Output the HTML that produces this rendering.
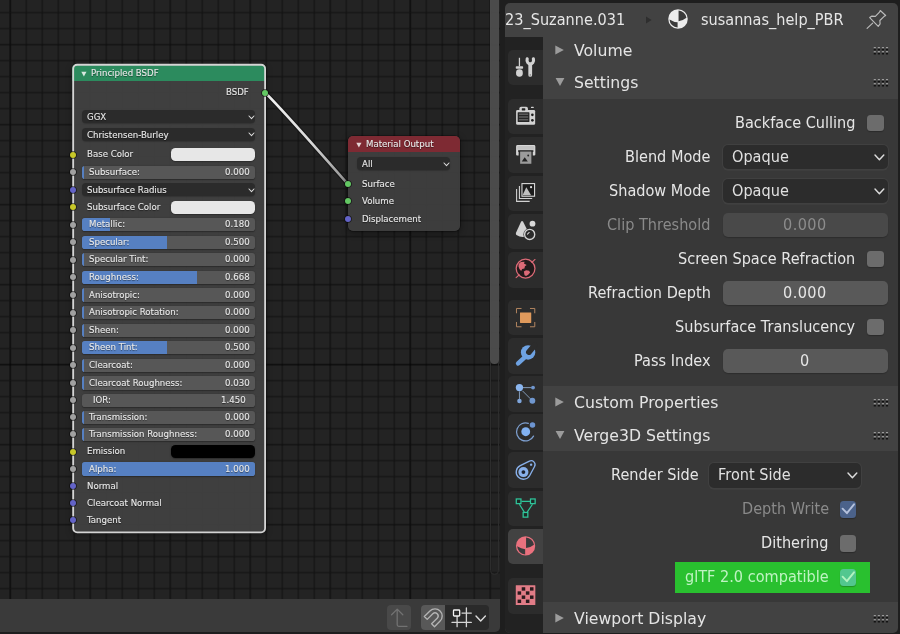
<!DOCTYPE html><html><head><meta charset="utf-8"><title>Blender</title><style>
html,body{margin:0;padding:0;}
body{-webkit-font-smoothing:antialiased;width:900px;height:634px;overflow:hidden;background:#1e1e1e;position:relative;font-family:"DejaVu Sans","Liberation Sans",sans-serif;}
.abs{position:absolute;}
.nt,.pt,.ph{will-change:transform;}
#ne{position:absolute;left:0;top:0;width:500.1px;height:632px;background:#232323;overflow:hidden;border-bottom-right-radius:5px;}
.nt{position:absolute;font-size:8.6px;letter-spacing:0px;color:#e8e8e8;white-space:nowrap;line-height:12px;height:12px;text-shadow:0 1px 1px rgba(0,0,0,.55);-webkit-text-stroke:0.12px #e8e8e8;}
.ntr{text-align:right;}
.dd{position:absolute;background:#2b2b2b;border-radius:4px;box-shadow:0 0.8px 1.2px rgba(0,0,0,.25);}
.sl{position:absolute;background:#575757;border-radius:2.8px;overflow:hidden;box-shadow:0 0.8px 1.4px rgba(0,0,0,.35);}
.sl i{position:absolute;left:0;top:0;bottom:0;background:#5680c2;display:block;}
.sw{position:absolute;border-radius:4.5px;box-shadow:0 0.8px 1.4px rgba(0,0,0,.4);}
.sock{position:absolute;width:6.0px;height:6.0px;border-radius:50%;box-shadow:0 0 0 .75px rgba(10,10,10,.75);}
.pt{position:absolute;font-size:14.5px;color:#e6e6e6;white-space:nowrap;line-height:20px;height:20px;transform:scaleY(1.06);transform-origin:50% 15px;}
.ptr{text-align:right;}
.ph{position:absolute;font-size:15.7px;color:#e4e4e4;white-space:nowrap;line-height:20px;height:20px;}
.tab{position:absolute;left:508px;width:35.2px;height:35.6px;background:#2c2c2c;border-radius:5px 0 0 5px;}
.fld{position:absolute;border-radius:5px;box-sizing:border-box;}
.cb{position:absolute;width:16.2px;height:16.4px;border-radius:3.5px;background:#666666;box-shadow:0 1px 1px rgba(0,0,0,.25);}
</style></head><body>
<div id="ne">
<svg class="abs" style="left:0;top:0" width="501" height="600" viewBox="0 0 501 600"><rect x="9.25" y="0" width="2.00" height="600" fill="#060606" opacity="0.38"/><rect x="9.75" y="0" width="1.00" height="600" fill="#060606" opacity="0.42"/><rect x="25.25" y="0" width="2.00" height="600" fill="#161616" opacity="0.38"/><rect x="25.75" y="0" width="1.00" height="600" fill="#161616" opacity="0.42"/><rect x="41.25" y="0" width="2.00" height="600" fill="#161616" opacity="0.38"/><rect x="41.75" y="0" width="1.00" height="600" fill="#161616" opacity="0.42"/><rect x="57.25" y="0" width="2.00" height="600" fill="#161616" opacity="0.38"/><rect x="57.75" y="0" width="1.00" height="600" fill="#161616" opacity="0.42"/><rect x="73.25" y="0" width="2.00" height="600" fill="#161616" opacity="0.38"/><rect x="73.75" y="0" width="1.00" height="600" fill="#161616" opacity="0.42"/><rect x="89.25" y="0" width="2.00" height="600" fill="#101010" opacity="0.38"/><rect x="89.75" y="0" width="1.00" height="600" fill="#101010" opacity="0.42"/><rect x="105.25" y="0" width="2.00" height="600" fill="#161616" opacity="0.38"/><rect x="105.75" y="0" width="1.00" height="600" fill="#161616" opacity="0.42"/><rect x="121.25" y="0" width="2.00" height="600" fill="#161616" opacity="0.38"/><rect x="121.75" y="0" width="1.00" height="600" fill="#161616" opacity="0.42"/><rect x="137.25" y="0" width="2.00" height="600" fill="#161616" opacity="0.38"/><rect x="137.75" y="0" width="1.00" height="600" fill="#161616" opacity="0.42"/><rect x="153.25" y="0" width="2.00" height="600" fill="#161616" opacity="0.38"/><rect x="153.75" y="0" width="1.00" height="600" fill="#161616" opacity="0.42"/><rect x="169.25" y="0" width="2.00" height="600" fill="#101010" opacity="0.38"/><rect x="169.75" y="0" width="1.00" height="600" fill="#101010" opacity="0.42"/><rect x="185.25" y="0" width="2.00" height="600" fill="#161616" opacity="0.38"/><rect x="185.75" y="0" width="1.00" height="600" fill="#161616" opacity="0.42"/><rect x="201.25" y="0" width="2.00" height="600" fill="#161616" opacity="0.38"/><rect x="201.75" y="0" width="1.00" height="600" fill="#161616" opacity="0.42"/><rect x="217.25" y="0" width="2.00" height="600" fill="#161616" opacity="0.38"/><rect x="217.75" y="0" width="1.00" height="600" fill="#161616" opacity="0.42"/><rect x="233.25" y="0" width="2.00" height="600" fill="#161616" opacity="0.38"/><rect x="233.75" y="0" width="1.00" height="600" fill="#161616" opacity="0.42"/><rect x="249.25" y="0" width="2.00" height="600" fill="#101010" opacity="0.38"/><rect x="249.75" y="0" width="1.00" height="600" fill="#101010" opacity="0.42"/><rect x="265.25" y="0" width="2.00" height="600" fill="#161616" opacity="0.38"/><rect x="265.75" y="0" width="1.00" height="600" fill="#161616" opacity="0.42"/><rect x="281.25" y="0" width="2.00" height="600" fill="#161616" opacity="0.38"/><rect x="281.75" y="0" width="1.00" height="600" fill="#161616" opacity="0.42"/><rect x="297.25" y="0" width="2.00" height="600" fill="#161616" opacity="0.38"/><rect x="297.75" y="0" width="1.00" height="600" fill="#161616" opacity="0.42"/><rect x="313.25" y="0" width="2.00" height="600" fill="#161616" opacity="0.38"/><rect x="313.75" y="0" width="1.00" height="600" fill="#161616" opacity="0.42"/><rect x="329.25" y="0" width="2.00" height="600" fill="#101010" opacity="0.38"/><rect x="329.75" y="0" width="1.00" height="600" fill="#101010" opacity="0.42"/><rect x="345.25" y="0" width="2.00" height="600" fill="#161616" opacity="0.38"/><rect x="345.75" y="0" width="1.00" height="600" fill="#161616" opacity="0.42"/><rect x="361.25" y="0" width="2.00" height="600" fill="#161616" opacity="0.38"/><rect x="361.75" y="0" width="1.00" height="600" fill="#161616" opacity="0.42"/><rect x="377.25" y="0" width="2.00" height="600" fill="#161616" opacity="0.38"/><rect x="377.75" y="0" width="1.00" height="600" fill="#161616" opacity="0.42"/><rect x="393.25" y="0" width="2.00" height="600" fill="#161616" opacity="0.38"/><rect x="393.75" y="0" width="1.00" height="600" fill="#161616" opacity="0.42"/><rect x="409.25" y="0" width="2.00" height="600" fill="#060606" opacity="0.38"/><rect x="409.75" y="0" width="1.00" height="600" fill="#060606" opacity="0.42"/><rect x="425.25" y="0" width="2.00" height="600" fill="#161616" opacity="0.38"/><rect x="425.75" y="0" width="1.00" height="600" fill="#161616" opacity="0.42"/><rect x="441.25" y="0" width="2.00" height="600" fill="#161616" opacity="0.38"/><rect x="441.75" y="0" width="1.00" height="600" fill="#161616" opacity="0.42"/><rect x="457.25" y="0" width="2.00" height="600" fill="#161616" opacity="0.38"/><rect x="457.75" y="0" width="1.00" height="600" fill="#161616" opacity="0.42"/><rect x="473.25" y="0" width="2.00" height="600" fill="#161616" opacity="0.38"/><rect x="473.75" y="0" width="1.00" height="600" fill="#161616" opacity="0.42"/><rect x="489.25" y="0" width="2.00" height="600" fill="#101010" opacity="0.38"/><rect x="489.75" y="0" width="1.00" height="600" fill="#101010" opacity="0.42"/><rect x="0" y="11.65" width="501" height="2.00" fill="#161616" opacity="0.38"/><rect x="0" y="12.15" width="501" height="1.00" fill="#161616" opacity="0.42"/><rect x="0" y="27.65" width="501" height="2.00" fill="#161616" opacity="0.38"/><rect x="0" y="28.15" width="501" height="1.00" fill="#161616" opacity="0.42"/><rect x="0" y="43.65" width="501" height="2.00" fill="#101010" opacity="0.38"/><rect x="0" y="44.15" width="501" height="1.00" fill="#101010" opacity="0.42"/><rect x="0" y="59.65" width="501" height="2.00" fill="#161616" opacity="0.38"/><rect x="0" y="60.15" width="501" height="1.00" fill="#161616" opacity="0.42"/><rect x="0" y="75.65" width="501" height="2.00" fill="#161616" opacity="0.38"/><rect x="0" y="76.15" width="501" height="1.00" fill="#161616" opacity="0.42"/><rect x="0" y="91.65" width="501" height="2.00" fill="#161616" opacity="0.38"/><rect x="0" y="92.15" width="501" height="1.00" fill="#161616" opacity="0.42"/><rect x="0" y="107.65" width="501" height="2.00" fill="#161616" opacity="0.38"/><rect x="0" y="108.15" width="501" height="1.00" fill="#161616" opacity="0.42"/><rect x="0" y="123.65" width="501" height="2.00" fill="#101010" opacity="0.38"/><rect x="0" y="124.15" width="501" height="1.00" fill="#101010" opacity="0.42"/><rect x="0" y="139.65" width="501" height="2.00" fill="#161616" opacity="0.38"/><rect x="0" y="140.15" width="501" height="1.00" fill="#161616" opacity="0.42"/><rect x="0" y="155.65" width="501" height="2.00" fill="#161616" opacity="0.38"/><rect x="0" y="156.15" width="501" height="1.00" fill="#161616" opacity="0.42"/><rect x="0" y="171.65" width="501" height="2.00" fill="#161616" opacity="0.38"/><rect x="0" y="172.15" width="501" height="1.00" fill="#161616" opacity="0.42"/><rect x="0" y="187.65" width="501" height="2.00" fill="#161616" opacity="0.38"/><rect x="0" y="188.15" width="501" height="1.00" fill="#161616" opacity="0.42"/><rect x="0" y="203.65" width="501" height="2.00" fill="#101010" opacity="0.38"/><rect x="0" y="204.15" width="501" height="1.00" fill="#101010" opacity="0.42"/><rect x="0" y="219.65" width="501" height="2.00" fill="#161616" opacity="0.38"/><rect x="0" y="220.15" width="501" height="1.00" fill="#161616" opacity="0.42"/><rect x="0" y="235.65" width="501" height="2.00" fill="#161616" opacity="0.38"/><rect x="0" y="236.15" width="501" height="1.00" fill="#161616" opacity="0.42"/><rect x="0" y="251.65" width="501" height="2.00" fill="#161616" opacity="0.38"/><rect x="0" y="252.15" width="501" height="1.00" fill="#161616" opacity="0.42"/><rect x="0" y="267.65" width="501" height="2.00" fill="#161616" opacity="0.38"/><rect x="0" y="268.15" width="501" height="1.00" fill="#161616" opacity="0.42"/><rect x="0" y="283.65" width="501" height="2.00" fill="#101010" opacity="0.38"/><rect x="0" y="284.15" width="501" height="1.00" fill="#101010" opacity="0.42"/><rect x="0" y="299.65" width="501" height="2.00" fill="#161616" opacity="0.38"/><rect x="0" y="300.15" width="501" height="1.00" fill="#161616" opacity="0.42"/><rect x="0" y="315.65" width="501" height="2.00" fill="#161616" opacity="0.38"/><rect x="0" y="316.15" width="501" height="1.00" fill="#161616" opacity="0.42"/><rect x="0" y="331.65" width="501" height="2.00" fill="#161616" opacity="0.38"/><rect x="0" y="332.15" width="501" height="1.00" fill="#161616" opacity="0.42"/><rect x="0" y="347.65" width="501" height="2.00" fill="#161616" opacity="0.38"/><rect x="0" y="348.15" width="501" height="1.00" fill="#161616" opacity="0.42"/><rect x="0" y="363.65" width="501" height="2.00" fill="#060606" opacity="0.38"/><rect x="0" y="364.15" width="501" height="1.00" fill="#060606" opacity="0.42"/><rect x="0" y="379.65" width="501" height="2.00" fill="#161616" opacity="0.38"/><rect x="0" y="380.15" width="501" height="1.00" fill="#161616" opacity="0.42"/><rect x="0" y="395.65" width="501" height="2.00" fill="#161616" opacity="0.38"/><rect x="0" y="396.15" width="501" height="1.00" fill="#161616" opacity="0.42"/><rect x="0" y="411.65" width="501" height="2.00" fill="#161616" opacity="0.38"/><rect x="0" y="412.15" width="501" height="1.00" fill="#161616" opacity="0.42"/><rect x="0" y="427.65" width="501" height="2.00" fill="#161616" opacity="0.38"/><rect x="0" y="428.15" width="501" height="1.00" fill="#161616" opacity="0.42"/><rect x="0" y="443.65" width="501" height="2.00" fill="#101010" opacity="0.38"/><rect x="0" y="444.15" width="501" height="1.00" fill="#101010" opacity="0.42"/><rect x="0" y="459.65" width="501" height="2.00" fill="#161616" opacity="0.38"/><rect x="0" y="460.15" width="501" height="1.00" fill="#161616" opacity="0.42"/><rect x="0" y="475.65" width="501" height="2.00" fill="#161616" opacity="0.38"/><rect x="0" y="476.15" width="501" height="1.00" fill="#161616" opacity="0.42"/><rect x="0" y="491.65" width="501" height="2.00" fill="#161616" opacity="0.38"/><rect x="0" y="492.15" width="501" height="1.00" fill="#161616" opacity="0.42"/><rect x="0" y="507.65" width="501" height="2.00" fill="#161616" opacity="0.38"/><rect x="0" y="508.15" width="501" height="1.00" fill="#161616" opacity="0.42"/><rect x="0" y="523.65" width="501" height="2.00" fill="#101010" opacity="0.38"/><rect x="0" y="524.15" width="501" height="1.00" fill="#101010" opacity="0.42"/><rect x="0" y="539.65" width="501" height="2.00" fill="#161616" opacity="0.38"/><rect x="0" y="540.15" width="501" height="1.00" fill="#161616" opacity="0.42"/><rect x="0" y="555.65" width="501" height="2.00" fill="#161616" opacity="0.38"/><rect x="0" y="556.15" width="501" height="1.00" fill="#161616" opacity="0.42"/><rect x="0" y="571.65" width="501" height="2.00" fill="#161616" opacity="0.38"/><rect x="0" y="572.15" width="501" height="1.00" fill="#161616" opacity="0.42"/><rect x="0" y="587.65" width="501" height="2.00" fill="#161616" opacity="0.38"/><rect x="0" y="588.15" width="501" height="1.00" fill="#161616" opacity="0.42"/></svg>
<div class="abs" style="left:490.2px;top:-6px;width:8.6px;height:581px;border:0.8px solid #2d2d2d;border-radius:4.5px;box-sizing:border-box;"></div>
<div class="abs" style="left:490.3px;top:-6px;width:8.4px;height:369.7px;background:rgba(80,80,80,.9);border-radius:4.2px;"></div>
<svg class="abs" style="left:0;top:0" width="501" height="600" viewBox="0 0 501 600"><defs><linearGradient id="lg" gradientUnits="userSpaceOnUse" x1="265" y1="92.5" x2="347.7" y2="183.9"><stop offset="0" stop-color="#f4f4f4"/><stop offset="0.55" stop-color="#d8d8d8"/><stop offset="1" stop-color="#8e8e8e"/></linearGradient></defs><path d="M265 92.5 C283 110 330 164 347.7 183.9" stroke="#141414" stroke-width="4.6" fill="none" stroke-linecap="round" opacity=".9"/><path d="M265 92.5 C283 110 330 164 347.7 183.9" stroke="url(#lg)" stroke-width="2.5" fill="none" stroke-linecap="round"/></svg>
<div class="abs" style="left:72.40px;top:64.40px;width:193.80px;height:468.60px;border-radius:5px;background:rgba(66,66,66,.93);box-shadow:0 2px 6px rgba(0,0,0,.35);overflow:hidden;"><div class="abs" style="left:0;top:0;right:0;height:16.30px;background:#2c8b5e;"></div></div>
<svg class="abs" style="left:0;top:0" width="501" height="600" viewBox="0 0 501 600"><rect x="73.2" y="64.75" width="191.9" height="467.55" rx="4" ry="4" fill="none" stroke="#d4d4d4" stroke-width="1.8"/></svg>
<svg class="abs" style="left:80.6px;top:70.6px" width="6" height="6" viewBox="0 0 6 6"><path d="M0.3 0.8 L5.5 0.8 L2.9 5.4 Z" fill="#d8e8e0"/></svg>
<div class="nt" style="top:66.70px;left:90.60px;">Principled BSDF</div>
<div class="nt ntr" style="top:86.20px;right:250.90px;">BSDF</div>
<div class="sock" style="left:262.00px;top:89.50px;background:#63c763"></div>
<div class="dd" style="left:81.90px;top:110.20px;width:173.40px;height:12.80px"></div>
<div class="nt" style="top:110.80px;left:86.80px;">GGX</div>
<svg class="abs" style="left:246.80px;top:113.70px" width="9.00" height="6.60" viewBox="0 0 9.00 6.60"><path d="M2.00 2.00 L4.50 4.60 L7.00 2.00" fill="none" stroke="#dddddd" stroke-width="1.05" stroke-linecap="round" stroke-linejoin="round"/></svg>
<div class="dd" style="left:81.90px;top:127.90px;width:173.40px;height:12.80px"></div>
<div class="nt" style="top:128.50px;left:86.80px;">Christensen-Burley</div>
<svg class="abs" style="left:246.80px;top:131.40px" width="9.00" height="6.60" viewBox="0 0 9.00 6.60"><path d="M2.00 2.00 L4.50 4.60 L7.00 2.00" fill="none" stroke="#dddddd" stroke-width="1.05" stroke-linecap="round" stroke-linejoin="round"/></svg>
<div class="nt" style="top:148.35px;left:86.80px;">Base Color</div>
<div class="sw" style="left:171.4px;top:148.15px;width:84px;height:13.00px;background:#e7e7e7"></div>
<div class="sock" style="left:70.00px;top:151.50px;background:#c7c729"></div>
<div class="sl" style="left:81.90px;top:165.55px;width:173.40px;height:13.20px"><i style="width:2.30px"></i></div>
<div class="nt" style="top:165.85px;left:88.70px;">Subsurface:</div>
<div class="nt ntr" style="top:165.85px;right:250.90px;">0.000</div>
<div class="sock" style="left:70.00px;top:169.00px;background:#a1a1a1"></div>
<div class="dd" style="left:81.90px;top:183.25px;width:173.40px;height:12.80px"></div>
<div class="nt" style="top:183.85px;left:86.80px;">Subsurface Radius</div>
<svg class="abs" style="left:246.80px;top:186.75px" width="9.00" height="6.60" viewBox="0 0 9.00 6.60"><path d="M2.00 2.00 L4.50 4.60 L7.00 2.00" fill="none" stroke="#dddddd" stroke-width="1.05" stroke-linecap="round" stroke-linejoin="round"/></svg>
<div class="sock" style="left:70.00px;top:186.50px;background:#6363c7"></div>
<div class="nt" style="top:200.95px;left:86.80px;">Subsurface Color</div>
<div class="sw" style="left:171.4px;top:200.75px;width:84px;height:13.00px;background:#e7e7e7"></div>
<div class="sock" style="left:70.00px;top:204.10px;background:#c7c729"></div>
<div class="sl" style="left:81.90px;top:218.15px;width:173.40px;height:13.20px"><i style="width:28.10px"></i></div>
<div class="nt" style="top:218.45px;left:88.70px;">Metallic:</div>
<div class="nt ntr" style="top:218.45px;right:250.90px;">0.180</div>
<div class="sock" style="left:70.00px;top:221.60px;background:#a1a1a1"></div>
<div class="sl" style="left:81.90px;top:235.75px;width:173.40px;height:13.20px"><i style="width:85.00px"></i></div>
<div class="nt" style="top:236.05px;left:88.70px;">Specular:</div>
<div class="nt ntr" style="top:236.05px;right:250.90px;">0.500</div>
<div class="sock" style="left:70.00px;top:239.20px;background:#a1a1a1"></div>
<div class="sl" style="left:81.90px;top:253.15px;width:173.40px;height:13.20px"><i style="width:2.30px"></i></div>
<div class="nt" style="top:253.45px;left:88.70px;">Specular Tint:</div>
<div class="nt ntr" style="top:253.45px;right:250.90px;">0.000</div>
<div class="sock" style="left:70.00px;top:256.60px;background:#a1a1a1"></div>
<div class="sl" style="left:81.90px;top:271.00px;width:173.40px;height:13.20px"><i style="width:114.87px"></i></div>
<div class="nt" style="top:271.30px;left:88.70px;">Roughness:</div>
<div class="nt ntr" style="top:271.30px;right:250.90px;">0.668</div>
<div class="sock" style="left:70.00px;top:274.45px;background:#a1a1a1"></div>
<div class="sl" style="left:81.90px;top:288.45px;width:173.40px;height:13.20px"><i style="width:2.30px"></i></div>
<div class="nt" style="top:288.75px;left:88.70px;">Anisotropic:</div>
<div class="nt ntr" style="top:288.75px;right:250.90px;">0.000</div>
<div class="sock" style="left:70.00px;top:291.90px;background:#a1a1a1"></div>
<div class="sl" style="left:81.90px;top:306.05px;width:173.40px;height:13.20px"><i style="width:2.30px"></i></div>
<div class="nt" style="top:306.35px;left:88.70px;">Anisotropic Rotation:</div>
<div class="nt ntr" style="top:306.35px;right:250.90px;">0.000</div>
<div class="sock" style="left:70.00px;top:309.50px;background:#a1a1a1"></div>
<div class="sl" style="left:81.90px;top:323.75px;width:173.40px;height:13.20px"><i style="width:2.30px"></i></div>
<div class="nt" style="top:324.05px;left:88.70px;">Sheen:</div>
<div class="nt ntr" style="top:324.05px;right:250.90px;">0.000</div>
<div class="sock" style="left:70.00px;top:327.20px;background:#a1a1a1"></div>
<div class="sl" style="left:81.90px;top:341.10px;width:173.40px;height:13.20px"><i style="width:85.00px"></i></div>
<div class="nt" style="top:341.40px;left:88.70px;">Sheen Tint:</div>
<div class="nt ntr" style="top:341.40px;right:250.90px;">0.500</div>
<div class="sock" style="left:70.00px;top:344.55px;background:#a1a1a1"></div>
<div class="sl" style="left:81.90px;top:358.55px;width:173.40px;height:13.20px"><i style="width:2.30px"></i></div>
<div class="nt" style="top:358.85px;left:88.70px;">Clearcoat:</div>
<div class="nt ntr" style="top:358.85px;right:250.90px;">0.000</div>
<div class="sock" style="left:70.00px;top:362.00px;background:#a1a1a1"></div>
<div class="sl" style="left:81.90px;top:376.35px;width:173.40px;height:13.20px"><i style="width:2.30px"></i></div>
<div class="nt" style="top:376.65px;left:88.70px;">Clearcoat Roughness:</div>
<div class="nt ntr" style="top:376.65px;right:250.90px;">0.030</div>
<div class="sock" style="left:70.00px;top:379.80px;background:#a1a1a1"></div>
<div class="sl" style="left:81.90px;top:393.55px;width:173.40px;height:13.20px"></div>
<div class="nt" style="top:393.85px;left:92.90px;">IOR:</div>
<div class="nt ntr" style="top:393.85px;right:254.80px;">1.450</div>
<div class="sock" style="left:70.00px;top:397.00px;background:#a1a1a1"></div>
<div class="sl" style="left:81.90px;top:410.55px;width:173.40px;height:13.20px"><i style="width:2.30px"></i></div>
<div class="nt" style="top:410.85px;left:88.70px;">Transmission:</div>
<div class="nt ntr" style="top:410.85px;right:250.90px;">0.000</div>
<div class="sock" style="left:70.00px;top:414.00px;background:#a1a1a1"></div>
<div class="sl" style="left:81.90px;top:427.85px;width:173.40px;height:13.20px"><i style="width:2.30px"></i></div>
<div class="nt" style="top:428.15px;left:88.70px;">Transmission Roughness:</div>
<div class="nt ntr" style="top:428.15px;right:250.90px;">0.000</div>
<div class="sock" style="left:70.00px;top:431.30px;background:#a1a1a1"></div>
<div class="nt" style="top:445.40px;left:86.80px;">Emission</div>
<div class="sw" style="left:171.4px;top:445.20px;width:84px;height:13.00px;background:#000000"></div>
<div class="sock" style="left:70.00px;top:448.55px;background:#c7c729"></div>
<div class="sl" style="left:81.90px;top:462.35px;width:173.40px;height:13.20px"><i style="width:173.40px"></i></div>
<div class="nt" style="top:462.65px;left:88.70px;">Alpha:</div>
<div class="nt ntr" style="top:462.65px;right:250.90px;">1.000</div>
<div class="sock" style="left:70.00px;top:465.80px;background:#a1a1a1"></div>
<div class="nt" style="top:480.05px;left:86.80px;">Normal</div>
<div class="sock" style="left:70.00px;top:483.20px;background:#6363c7"></div>
<div class="nt" style="top:496.95px;left:86.80px;">Clearcoat Normal</div>
<div class="sock" style="left:70.00px;top:500.10px;background:#6363c7"></div>
<div class="nt" style="top:514.15px;left:86.80px;">Tangent</div>
<div class="sock" style="left:70.00px;top:517.30px;background:#6363c7"></div>
<div class="abs" style="left:348.10px;top:135.90px;width:112.00px;height:94.90px;border-radius:5px;background:rgba(64,64,64,.93);box-shadow:0 2px 7px rgba(0,0,0,.45),0 0 0 .6px rgba(0,0,0,.5);overflow:hidden;"><div class="abs" style="left:0;top:0;right:0;height:15.90px;background:#7e2a33;"></div></div>
<svg class="abs" style="left:355.6px;top:141.6px" width="6" height="6" viewBox="0 0 6 6"><path d="M0.3 0.8 L5.5 0.8 L2.9 5.4 Z" fill="#e6d6d8"/></svg>
<div class="nt" style="top:137.90px;left:365.60px;">Material Output</div>
<div class="dd" style="left:356.80px;top:157.30px;width:93.40px;height:13.00px"></div>
<div class="nt" style="top:158.00px;left:361.70px;">All</div>
<svg class="abs" style="left:441.70px;top:160.90px" width="9.00" height="6.60" viewBox="0 0 9.00 6.60"><path d="M2.00 2.00 L4.50 4.60 L7.00 2.00" fill="none" stroke="#dddddd" stroke-width="1.05" stroke-linecap="round" stroke-linejoin="round"/></svg>
<div class="nt" style="top:177.60px;left:361.80px;">Surface</div>
<div class="sock" style="left:344.70px;top:180.90px;background:#63c763"></div>
<div class="nt" style="top:195.00px;left:361.80px;">Volume</div>
<div class="sock" style="left:344.70px;top:198.30px;background:#63c763"></div>
<div class="nt" style="top:212.50px;left:361.80px;">Displacement</div>
<div class="sock" style="left:344.70px;top:215.80px;background:#6363c7"></div>
<div class="abs" style="left:0;top:599.1px;width:500.5px;height:33px;background:#3a3a3a;"></div>
<div class="abs" style="left:386.7px;top:605.3px;width:24.2px;height:24.7px;background:#494949;border-radius:4px;"></div>
<svg class="abs" style="left:386.7px;top:605.3px" width="25" height="25" viewBox="0 0 25 25"><path d="M4.6 9.8 L10.2 4.1 L15.8 9.8 M10.2 4.3 V19.8 Q10.2 21.3 11.7 21.3 H20" fill="none" stroke="#727272" stroke-width="1.3" stroke-linecap="round" stroke-linejoin="round"/></svg>
<div class="abs" style="left:421.1px;top:605.3px;width:24.3px;height:24.7px;background:#585858;border-radius:4px 0 0 4px;"></div>
<svg class="abs" style="left:414.6px;top:596.0px" width="40" height="40" viewBox="-20 -20 40 40"><g transform="rotate(45)"><path d="M-7.20 7.90 L-7.20 0 A7.20 7.20 0 0 1 7.20 0 L7.20 7.90 L3.10 7.90 L3.10 0 A3.10 3.10 0 0 0 -3.10 0 L-3.10 7.90 Z" fill="none" stroke="#b4b4b4" stroke-width="1.35" stroke-linejoin="round"/></g></svg>
<div class="abs" style="left:445.4px;top:605.3px;width:43.8px;height:24.7px;background:#2a2a2a;border-radius:0 4px 4px 0;"></div>
<svg class="abs" style="left:445px;top:600px" width="34" height="34" viewBox="445 600 34 34"><path d="M457.1 616.2 V626.7 M466.4 608 V626.7 M452 622.4 H471.3 M462 613.1 H471.3" fill="none" stroke="#d4d4d4" stroke-width="1.3" stroke-linecap="round"/><rect x="453.5" y="610.0" width="6.2" height="6.0" rx="0.8" fill="#2a2a2a" stroke="#f4f4f4" stroke-width="1.3"/></svg>
<svg class="abs" style="left:474.40px;top:613.75px" width="13.40" height="8.90" viewBox="0 0 13.40 8.90"><path d="M2.00 2.00 L6.70 6.90 L11.40 2.00" fill="none" stroke="#dcdcdc" stroke-width="1.40" stroke-linecap="round" stroke-linejoin="round"/></svg>
</div>
<div class="abs" id="pe" style="left:505.00px;top:3.20px;width:393.40px;height:630.00px;background:#424242;border-radius:5px;overflow:hidden;">
<div class="abs" style="left:0;top:34.10px;width:38.10px;height:600px;background:#222222;"></div>
<div class="abs" style="left:38.10px;top:95.40px;right:0;height:287.30px;background:#383838;"></div>
<div class="abs" style="left:38.10px;top:447.70px;right:0;height:150.80px;background:#383838;"></div>
</div>
<div class="pt" style="top:9.70px;left:505.40px;">23_Suzanne.031</div>
<svg class="abs" style="left:644px;top:15px" width="10" height="10" viewBox="0 0 10 10"><path d="M2 1.6 L7.6 5 L2 8.4 Z" fill="#2e2e2e"/></svg>
<svg class="abs" style="left:666.40px;top:7.40px" width="24" height="24" viewBox="-12 -12 24 24"><g transform="scale(0.06724)"><circle r="145" fill="#ececec"/><path d="M8 -127 L8 32 Q74 26 126 -18 A127 127 0 0 0 8 -127 Z" fill="#3a3a3a"/><path d="M-126 6 Q-64 44 -6 50 L-6 127 A127 127 0 0 1 -126 6 Z" fill="#3a3a3a"/></g></svg>
<div class="pt" style="top:9.70px;left:701.00px;">susannas_help_PBR</div>
<svg class="abs" style="left:860px;top:5px" width="30" height="30" viewBox="0 0 634 634"><g fill="none" stroke="#bcbcbc" stroke-width="24" stroke-linejoin="round" stroke-linecap="round"><path d="M150 495 L268 382"/><path d="M205 265 L245 236 L325 240 L412 152 L428 116 L542 222 L505 245 L420 328 L425 400 L385 450 Z"/></g></svg>
<svg class="abs" style="left:555.20px;top:44.70px" width="10" height="10" viewBox="0 0 10 10"><path d="M0.3 0.6 L8.8 5 L0.3 9.4 Z" fill="#9c9c9c"/></svg>
<div class="ph" style="top:40.60px;left:573.60px;">Volume</div>
<svg class="abs" style="left:873px;top:46.70px" width="16" height="9" viewBox="0 0 16 9"><rect x="0.75" y="0.00" width="2.1" height="1.5" fill="#9c9c9c"/><rect x="0.75" y="1.60" width="2.1" height="1.8" fill="#121212"/><rect x="4.82" y="0.00" width="2.1" height="1.5" fill="#9c9c9c"/><rect x="4.82" y="1.60" width="2.1" height="1.8" fill="#121212"/><rect x="8.89" y="0.00" width="2.1" height="1.5" fill="#9c9c9c"/><rect x="8.89" y="1.60" width="2.1" height="1.8" fill="#121212"/><rect x="12.96" y="0.00" width="2.1" height="1.5" fill="#9c9c9c"/><rect x="12.96" y="1.60" width="2.1" height="1.8" fill="#121212"/><rect x="0.75" y="4.10" width="2.1" height="1.5" fill="#9c9c9c"/><rect x="0.75" y="5.70" width="2.1" height="1.8" fill="#121212"/><rect x="4.82" y="4.10" width="2.1" height="1.5" fill="#9c9c9c"/><rect x="4.82" y="5.70" width="2.1" height="1.8" fill="#121212"/><rect x="8.89" y="4.10" width="2.1" height="1.5" fill="#9c9c9c"/><rect x="8.89" y="5.70" width="2.1" height="1.8" fill="#121212"/><rect x="12.96" y="4.10" width="2.1" height="1.5" fill="#9c9c9c"/><rect x="12.96" y="5.70" width="2.1" height="1.8" fill="#121212"/></svg>
<svg class="abs" style="left:555.00px;top:77.30px" width="10" height="10" viewBox="0 0 10 10"><path d="M0.6 0.9 L9.4 0.9 L5 8.9 Z" fill="#9c9c9c"/></svg>
<div class="ph" style="top:73.20px;left:573.60px;">Settings</div>
<svg class="abs" style="left:873px;top:79.30px" width="16" height="9" viewBox="0 0 16 9"><rect x="0.75" y="0.00" width="2.1" height="1.5" fill="#9c9c9c"/><rect x="0.75" y="1.60" width="2.1" height="1.8" fill="#121212"/><rect x="4.82" y="0.00" width="2.1" height="1.5" fill="#9c9c9c"/><rect x="4.82" y="1.60" width="2.1" height="1.8" fill="#121212"/><rect x="8.89" y="0.00" width="2.1" height="1.5" fill="#9c9c9c"/><rect x="8.89" y="1.60" width="2.1" height="1.8" fill="#121212"/><rect x="12.96" y="0.00" width="2.1" height="1.5" fill="#9c9c9c"/><rect x="12.96" y="1.60" width="2.1" height="1.8" fill="#121212"/><rect x="0.75" y="4.10" width="2.1" height="1.5" fill="#9c9c9c"/><rect x="0.75" y="5.70" width="2.1" height="1.8" fill="#121212"/><rect x="4.82" y="4.10" width="2.1" height="1.5" fill="#9c9c9c"/><rect x="4.82" y="5.70" width="2.1" height="1.8" fill="#121212"/><rect x="8.89" y="4.10" width="2.1" height="1.5" fill="#9c9c9c"/><rect x="8.89" y="5.70" width="2.1" height="1.8" fill="#121212"/><rect x="12.96" y="4.10" width="2.1" height="1.5" fill="#9c9c9c"/><rect x="12.96" y="5.70" width="2.1" height="1.8" fill="#121212"/></svg>
<svg class="abs" style="left:555.20px;top:397.20px" width="10" height="10" viewBox="0 0 10 10"><path d="M0.3 0.6 L8.8 5 L0.3 9.4 Z" fill="#9c9c9c"/></svg>
<div class="ph" style="top:393.10px;left:573.60px;">Custom Properties</div>
<svg class="abs" style="left:873px;top:399.20px" width="16" height="9" viewBox="0 0 16 9"><rect x="0.75" y="0.00" width="2.1" height="1.5" fill="#9c9c9c"/><rect x="0.75" y="1.60" width="2.1" height="1.8" fill="#121212"/><rect x="4.82" y="0.00" width="2.1" height="1.5" fill="#9c9c9c"/><rect x="4.82" y="1.60" width="2.1" height="1.8" fill="#121212"/><rect x="8.89" y="0.00" width="2.1" height="1.5" fill="#9c9c9c"/><rect x="8.89" y="1.60" width="2.1" height="1.8" fill="#121212"/><rect x="12.96" y="0.00" width="2.1" height="1.5" fill="#9c9c9c"/><rect x="12.96" y="1.60" width="2.1" height="1.8" fill="#121212"/><rect x="0.75" y="4.10" width="2.1" height="1.5" fill="#9c9c9c"/><rect x="0.75" y="5.70" width="2.1" height="1.8" fill="#121212"/><rect x="4.82" y="4.10" width="2.1" height="1.5" fill="#9c9c9c"/><rect x="4.82" y="5.70" width="2.1" height="1.8" fill="#121212"/><rect x="8.89" y="4.10" width="2.1" height="1.5" fill="#9c9c9c"/><rect x="8.89" y="5.70" width="2.1" height="1.8" fill="#121212"/><rect x="12.96" y="4.10" width="2.1" height="1.5" fill="#9c9c9c"/><rect x="12.96" y="5.70" width="2.1" height="1.8" fill="#121212"/></svg>
<svg class="abs" style="left:555.00px;top:429.80px" width="10" height="10" viewBox="0 0 10 10"><path d="M0.6 0.9 L9.4 0.9 L5 8.9 Z" fill="#9c9c9c"/></svg>
<div class="ph" style="top:425.70px;left:573.60px;">Verge3D Settings</div>
<svg class="abs" style="left:873px;top:431.80px" width="16" height="9" viewBox="0 0 16 9"><rect x="0.75" y="0.00" width="2.1" height="1.5" fill="#9c9c9c"/><rect x="0.75" y="1.60" width="2.1" height="1.8" fill="#121212"/><rect x="4.82" y="0.00" width="2.1" height="1.5" fill="#9c9c9c"/><rect x="4.82" y="1.60" width="2.1" height="1.8" fill="#121212"/><rect x="8.89" y="0.00" width="2.1" height="1.5" fill="#9c9c9c"/><rect x="8.89" y="1.60" width="2.1" height="1.8" fill="#121212"/><rect x="12.96" y="0.00" width="2.1" height="1.5" fill="#9c9c9c"/><rect x="12.96" y="1.60" width="2.1" height="1.8" fill="#121212"/><rect x="0.75" y="4.10" width="2.1" height="1.5" fill="#9c9c9c"/><rect x="0.75" y="5.70" width="2.1" height="1.8" fill="#121212"/><rect x="4.82" y="4.10" width="2.1" height="1.5" fill="#9c9c9c"/><rect x="4.82" y="5.70" width="2.1" height="1.8" fill="#121212"/><rect x="8.89" y="4.10" width="2.1" height="1.5" fill="#9c9c9c"/><rect x="8.89" y="5.70" width="2.1" height="1.8" fill="#121212"/><rect x="12.96" y="4.10" width="2.1" height="1.5" fill="#9c9c9c"/><rect x="12.96" y="5.70" width="2.1" height="1.8" fill="#121212"/></svg>
<svg class="abs" style="left:555.20px;top:613.40px" width="10" height="10" viewBox="0 0 10 10"><path d="M0.3 0.6 L8.8 5 L0.3 9.4 Z" fill="#9c9c9c"/></svg>
<div class="ph" style="top:609.30px;left:573.60px;">Viewport Display</div>
<svg class="abs" style="left:873px;top:615.40px" width="16" height="9" viewBox="0 0 16 9"><rect x="0.75" y="0.00" width="2.1" height="1.5" fill="#9c9c9c"/><rect x="0.75" y="1.60" width="2.1" height="1.8" fill="#121212"/><rect x="4.82" y="0.00" width="2.1" height="1.5" fill="#9c9c9c"/><rect x="4.82" y="1.60" width="2.1" height="1.8" fill="#121212"/><rect x="8.89" y="0.00" width="2.1" height="1.5" fill="#9c9c9c"/><rect x="8.89" y="1.60" width="2.1" height="1.8" fill="#121212"/><rect x="12.96" y="0.00" width="2.1" height="1.5" fill="#9c9c9c"/><rect x="12.96" y="1.60" width="2.1" height="1.8" fill="#121212"/><rect x="0.75" y="4.10" width="2.1" height="1.5" fill="#9c9c9c"/><rect x="0.75" y="5.70" width="2.1" height="1.8" fill="#121212"/><rect x="4.82" y="4.10" width="2.1" height="1.5" fill="#9c9c9c"/><rect x="4.82" y="5.70" width="2.1" height="1.8" fill="#121212"/><rect x="8.89" y="4.10" width="2.1" height="1.5" fill="#9c9c9c"/><rect x="8.89" y="5.70" width="2.1" height="1.8" fill="#121212"/><rect x="12.96" y="4.10" width="2.1" height="1.5" fill="#9c9c9c"/><rect x="12.96" y="5.70" width="2.1" height="1.8" fill="#121212"/></svg>
<div class="pt ptr" style="top:112.60px;right:44.80px;">Backface Culling</div>
<div class="cb" style="left:867.40px;top:114.90px;background:#6c6c6c"></div>
<div class="pt ptr" style="top:146.60px;right:189.20px;">Blend Mode</div>
<div class="fld" style="left:722.70px;top:144.90px;width:165.70px;height:24.40px;background:#2c2c2c;box-shadow:0 0 0 1px #404040,0 1.6px 0 0 #434343;"></div>
<div class="pt" style="top:146.70px;left:732.30px;color:#e0e0e0;">Opaque</div>
<svg class="abs" style="left:873.40px;top:153.25px" width="12.80" height="8.70" viewBox="0 0 12.80 8.70"><path d="M2.00 2.00 L6.40 6.70 L10.80 2.00" fill="none" stroke="#dcdcdc" stroke-width="1.45" stroke-linecap="round" stroke-linejoin="round"/></svg>
<div class="pt ptr" style="top:180.60px;right:189.20px;">Shadow Mode</div>
<div class="fld" style="left:722.70px;top:178.90px;width:165.70px;height:24.40px;background:#2c2c2c;box-shadow:0 0 0 1px #404040,0 1.6px 0 0 #434343;"></div>
<div class="pt" style="top:180.70px;left:732.30px;color:#e0e0e0;">Opaque</div>
<svg class="abs" style="left:873.40px;top:187.25px" width="12.80" height="8.70" viewBox="0 0 12.80 8.70"><path d="M2.00 2.00 L6.40 6.70 L10.80 2.00" fill="none" stroke="#dcdcdc" stroke-width="1.45" stroke-linecap="round" stroke-linejoin="round"/></svg>
<div class="pt ptr" style="top:214.60px;right:189.20px;color:#8a8a8a;">Clip Threshold</div>
<div class="fld" style="left:722.70px;top:212.90px;width:165.70px;height:24.40px;background:#494949;box-shadow:0 1px 1px rgba(0,0,0,.2);"></div>
<div class="pt" style="left:722.10px;top:214.70px;width:165.70px;text-align:center;letter-spacing:.4px;color:#8c8c8c">0.000</div>
<div class="pt ptr" style="top:248.60px;right:44.80px;">Screen Space Refraction</div>
<div class="cb" style="left:867.40px;top:250.90px;background:#6c6c6c"></div>
<div class="pt ptr" style="top:282.60px;right:189.20px;">Refraction Depth</div>
<div class="fld" style="left:722.70px;top:280.90px;width:165.70px;height:24.40px;background:#595959;box-shadow:0 1px 1px rgba(0,0,0,.2);"></div>
<div class="pt" style="left:722.10px;top:282.70px;width:165.70px;text-align:center;letter-spacing:.4px;color:#e6e6e6">0.000</div>
<div class="pt ptr" style="top:316.60px;right:44.80px;">Subsurface Translucency</div>
<div class="cb" style="left:867.40px;top:318.90px;background:#6c6c6c"></div>
<div class="pt ptr" style="top:350.60px;right:189.20px;">Pass Index</div>
<div class="fld" style="left:722.70px;top:348.90px;width:165.70px;height:24.40px;background:#595959;box-shadow:0 1px 1px rgba(0,0,0,.2);"></div>
<div class="pt" style="left:722.10px;top:350.70px;width:165.70px;text-align:center;letter-spacing:.4px;color:#e6e6e6">0</div>
<div class="pt ptr" style="top:464.80px;right:201.70px;">Render Side</div>
<div class="fld" style="left:708.80px;top:462.60px;width:152.50px;height:25.40px;background:#2c2c2c;box-shadow:0 0 0 1px #404040,0 1.6px 0 0 #434343;"></div>
<div class="pt" style="top:464.90px;left:718.40px;color:#e0e0e0;">Front Side</div>
<svg class="abs" style="left:846.30px;top:471.45px" width="12.80" height="8.70" viewBox="0 0 12.80 8.70"><path d="M2.00 2.00 L6.40 6.70 L10.80 2.00" fill="none" stroke="#dcdcdc" stroke-width="1.45" stroke-linecap="round" stroke-linejoin="round"/></svg>
<div class="pt ptr" style="top:498.65px;right:71.20px;color:#8a8a8a;">Depth Write</div>
<div class="cb" style="left:840.30px;top:501.15px;background:#4b628a"></div>
<svg class="abs" style="left:840.10px;top:501.15px" width="17" height="17" viewBox="0 0 17 17"><path d="M2.6 7.7 L6.9 12.2 L14.0 3.3" fill="none" stroke="#b4c1dc" stroke-width="1.9" stroke-linecap="round" stroke-linejoin="round"/></svg>
<div class="pt ptr" style="top:532.70px;right:71.20px;">Dithering</div>
<div class="cb" style="left:840.30px;top:535.20px;background:#6c6c6c"></div>
<div class="abs" style="left:675.2px;top:562.3px;width:194.9px;height:30.7px;background:#29c02f;"></div>
<div class="pt ptr" style="top:566.95px;right:71.20px;color:#bff3c2;">glTF 2.0 compatible</div>
<div class="cb" style="left:840.30px;top:569.25px;background:#52c78f"></div>
<svg class="abs" style="left:840.10px;top:569.25px" width="17" height="17" viewBox="0 0 17 17"><path d="M2.6 7.7 L6.9 12.2 L14.0 3.3" fill="none" stroke="#b2f3c0" stroke-width="1.9" stroke-linecap="round" stroke-linejoin="round"/></svg>
<div class="tab" style="top:49.70px;"></div>
<svg class="abs" style="left:506px;top:48.00px" width="40" height="40" viewBox="0 0 634 634"><g fill="#d2d2d2"><rect x="203" y="155" width="20" height="135"/><rect x="155" y="290" width="116" height="40" rx="12"/><rect x="160" y="338" width="106" height="118" rx="50"/></g><path d="M336 172 C322 225 357 252 385 252 C413 252 448 225 434 172" fill="none" stroke="#d2d2d2" stroke-width="50" stroke-linecap="round"/><path d="M384 262 V426" stroke="#d2d2d2" stroke-width="60" stroke-linecap="round"/><circle cx="384" cy="426" r="9" fill="#555"/></svg>
<div class="tab" style="top:98.70px;"></div>
<svg class="abs" style="left:506px;top:97.00px" width="40" height="40" viewBox="0 0 634 634"><g fill="#d2d2d2"><rect x="160" y="205" width="302" height="235" rx="20"/><rect x="212" y="155" width="136" height="80" rx="28"/><rect x="395" y="155" width="46" height="20" rx="10"/></g><rect x="250" y="180" width="56" height="33" rx="6" fill="#222"/><rect x="185" y="240" width="186" height="155" rx="8" fill="#262626"/><g stroke="#8c8c8c" stroke-width="13"><path d="M205 272 H352 M205 317 H352 M205 362 H352"/></g><circle cx="418" cy="283" r="21" fill="#1e1e1e"/><circle cx="418" cy="370" r="21" fill="#1e1e1e"/></svg>
<div class="tab" style="top:137.10px;"></div>
<svg class="abs" style="left:506px;top:135.00px" width="40" height="40" viewBox="0 0 634 634"><path d="M182 160 H443 A22 22 0 0 1 465 182 V310 A16 16 0 0 1 449 326 H425 V246 H200 V326 H176 A16 16 0 0 1 160 310 V182 A22 22 0 0 1 182 160 Z" fill="#d6d6d6"/><rect x="178" y="176" width="270" height="56" rx="10" fill="#c2c2c2"/><rect x="190" y="244" width="246" height="20" fill="#1f1f1f"/><rect x="224" y="262" width="178" height="194" fill="#9b9b9b"/><path d="M250 422 L296 352 L346 422 Z" fill="#222"/><circle cx="352" cy="325" r="15" fill="#222"/></svg>
<div class="tab" style="top:175.50px;"></div>
<svg class="abs" style="left:506px;top:173.00px" width="40" height="40" viewBox="0 0 634 634"><g fill="none" stroke="#d2d2d2" stroke-width="17"><path d="M168 252 V450 H375"/><path d="M213 207 V405 H415"/></g><rect x="253" y="168" width="200" height="200" fill="#1c1c1c" stroke="#dcdcdc" stroke-width="17"/><path d="M262 352 L322 226 L398 352 Z" fill="#c0c0c0"/><circle cx="397" cy="224" r="17" fill="#e4e4e4"/></svg>
<div class="tab" style="top:213.70px;"></div>
<svg class="abs" style="left:506px;top:212.00px" width="40" height="40" viewBox="0 0 634 634"><path d="M240 150 Q255 135 270 150 L345 300 L345 380 Q250 420 165 365 Q150 350 160 325 Z" fill="#d2d2d2"/><circle cx="420" cy="185" r="46" fill="#d8d8d8"/><circle cx="375" cy="355" r="99" fill="#2c2c2c"/><circle cx="375" cy="355" r="80" fill="#2a2a2a" stroke="#d2d2d2" stroke-width="22"/><path d="M340 352 L368 324" stroke="#d8d8d8" stroke-width="16" stroke-linecap="round"/></svg>
<div class="tab" style="top:252.00px;"></div>
<svg class="abs" style="left:506px;top:250.00px" width="40" height="40" viewBox="0 0 634 634"><circle cx="310" cy="295" r="149" fill="#231a1b" stroke="#dc6a77" stroke-width="20"/><path d="M160 438 L212 392 M408 198 L460 150" stroke="#dc6a77" stroke-width="17" stroke-linecap="round"/><path d="M200 222 L235 190 L295 185 L285 212 L328 236 L300 258 L292 292 L256 300 L240 332 L213 300 L198 262 Z" fill="#dc6a77"/><path d="M283 342 L318 320 L366 330 L382 356 L352 392 L318 412 L294 400 Z" fill="#dc6a77"/></svg>
<div class="tab" style="top:299.90px;"></div>
<svg class="abs" style="left:506px;top:298.00px" width="40" height="40" viewBox="0 0 634 634"><rect x="222" y="228" width="178" height="168" rx="6" fill="#e09a5c"/><g fill="none" stroke="#b98a62" stroke-width="15"><path d="M166 242 V166 H246"/><path d="M380 166 H456 V242"/><path d="M166 380 V456 H246"/><path d="M380 456 H456 V380"/></g></svg>
<div class="tab" style="top:338.00px;"></div>
<svg class="abs" style="left:506px;top:337.00px" width="40" height="40" viewBox="0 0 634 634"><path d="M192 418 L300 320" stroke="#6ea2e2" stroke-width="72" stroke-linecap="round"/><circle cx="350" cy="245" r="114" fill="#6ea2e2"/><path d="M364.0 238.0 L454.0 130.8" stroke="#2c2c2c" stroke-width="92" stroke-linecap="round"/></svg>
<div class="tab" style="top:376.20px;"></div>
<svg class="abs" style="left:506px;top:375.00px" width="40" height="40" viewBox="0 0 634 634"><g stroke="#8ea8c8" stroke-width="14"><path d="M270 200 H400"/><path d="M213 260 V380"/><path d="M262 252 L388 378"/></g><circle cx="213" cy="200" r="58" fill="#8bb6f0"/><circle cx="428" cy="200" r="31" fill="#7097cf"/><circle cx="418" cy="408" r="46" fill="#7097cf"/><circle cx="213" cy="413" r="36" fill="#7fa6dc"/></svg>
<div class="tab" style="top:414.20px;"></div>
<svg class="abs" style="left:506px;top:413.00px" width="40" height="40" viewBox="0 0 634 634"><path d="M354.2 164.0 A143 143 0 1 0 436.3 367.1" fill="none" stroke="#7d9fcf" stroke-width="20" stroke-linecap="round"/><circle cx="313" cy="297" r="70" fill="#82b2f2"/><circle cx="420" cy="190" r="52" fill="#2c2c2c"/><circle cx="420" cy="190" r="44" fill="#6c94d0"/></svg>
<div class="tab" style="top:452.40px;"></div>
<svg class="abs" style="left:506px;top:451.00px" width="40" height="40" viewBox="0 0 634 634"><path d="M376.5 387.7 L452.7 245.2 A62.0 62.0 0 0 0 370.6 160.4 L225.7 231.7 A114.0 114.0 0 1 0 376.5 387.7 Z" fill="none" stroke="#88b0ea" stroke-width="21" stroke-linejoin="round"/><circle cx="276" cy="334" r="80" fill="#88b0ea"/><circle cx="276" cy="334" r="30" fill="#1d2230"/><circle cx="398" cy="216" r="19" fill="#88b0ea"/></svg>
<div class="tab" style="top:490.50px;"></div>
<svg class="abs" style="left:506px;top:489.00px" width="40" height="40" viewBox="0 0 634 634"><g fill="none" stroke="#2fc69b" stroke-width="19"><path d="M245 195 H385 M212 242 L290 366 M420 242 L336 366"/></g><g fill="#1c2a26" stroke="#2fc69b" stroke-width="20"><rect x="163" y="158" width="74" height="74"/><rect x="388" y="158" width="74" height="74"/><rect x="272" y="372" width="74" height="74"/></g></svg>
<div class="tab" style="top:528.60px;background:#424242;"></div>
<svg class="abs" style="left:506px;top:527.00px" width="40" height="40" viewBox="0 0 634 634"><g transform="translate(310 300) scale(1.055)"><circle r="145" fill="#ea717e"/><path d="M8 -127 L8 32 Q74 26 126 -18 A127 127 0 0 0 8 -127 Z" fill="#3b3a3c"/><path d="M-126 6 Q-64 44 -6 50 L-6 127 A127 127 0 0 1 -126 6 Z" fill="#3b3a3c"/></g></svg>
<div class="tab" style="top:578.00px;"></div>
<svg class="abs" style="left:506px;top:576.00px" width="40" height="40" viewBox="0 0 634 634"><rect x="155" y="148" width="310" height="312" rx="4" fill="#e17c87"/><rect x="249" y="178" width="56" height="54" fill="#2b1b1e"/><rect x="380" y="178" width="56" height="54" fill="#2b1b1e"/><rect x="184" y="243" width="56" height="54" fill="#2b1b1e"/><rect x="315" y="243" width="56" height="54" fill="#2b1b1e"/><rect x="249" y="309" width="56" height="54" fill="#2b1b1e"/><rect x="380" y="309" width="56" height="54" fill="#2b1b1e"/><rect x="184" y="374" width="56" height="54" fill="#2b1b1e"/><rect x="315" y="374" width="56" height="54" fill="#2b1b1e"/></svg>
</body></html>
